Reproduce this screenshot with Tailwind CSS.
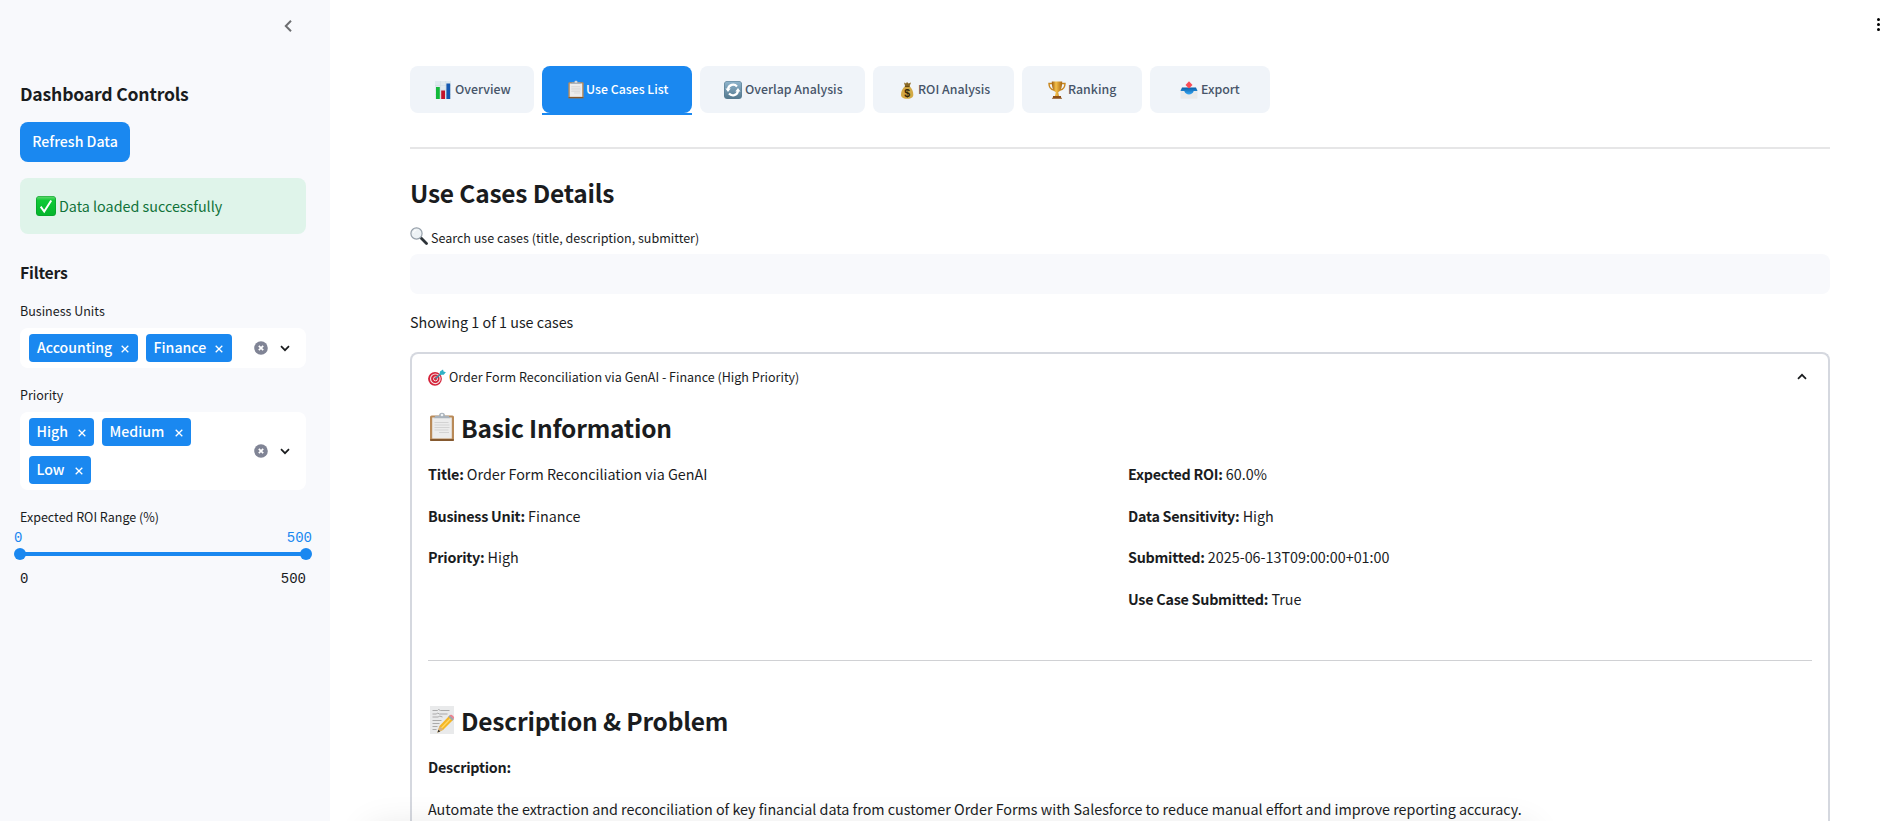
<!DOCTYPE html>
<html lang="en">
<head>
<meta charset="utf-8">
<title>Use Cases Dashboard</title>
<script src="https://cdn.jsdelivr.net/npm/@tailwindcss/browser@4"></script>
</head>
<body class="h-[821px] w-[1884px] overflow-hidden bg-white font-['Noto_Sans_CJK_SC','Noto_Sans',sans-serif] text-[14.33px] text-[#1a1c1e]">
<svg class="absolute size-0" xmlns="http://www.w3.org/2000/svg">
  <defs>
    <linearGradient id="gold" x1="0" x2="1"><stop offset="0" stop-color="#9a5a10"/><stop offset=".4" stop-color="#f4c04a"/><stop offset="1" stop-color="#a8650f"/></linearGradient>
    <linearGradient id="green" x1="0" y1="0" x2="0" y2="1"><stop offset="0" stop-color="#5fd86c"/><stop offset=".2" stop-color="#0fc936"/><stop offset="1" stop-color="#04b52c"/></linearGradient>
    <linearGradient id="steel" x1="0" y1="0" x2="0" y2="1"><stop offset="0" stop-color="#8fb4cc"/><stop offset="1" stop-color="#54798f"/></linearGradient>
    <linearGradient id="tray" x1="0" y1="0" x2="0" y2="1"><stop offset="0" stop-color="#0b5fa8"/><stop offset="1" stop-color="#35a5f2"/></linearGradient>
  </defs>
  <symbol id="clipboard" viewBox="0 0 28 30">
    <rect x="2" y="3.5" width="24" height="25.5" rx="1.6" fill="#b98a58"/>
    <rect x="2" y="27" width="24" height="2" rx="1" fill="#85592f"/>
    <rect x="4.2" y="5.5" width="19.6" height="21" fill="#ececec"/>
    <path d="M6.5 10.5h14M6.5 13h15M6.5 15.5h15M6.5 18h14M11 20.5h10" stroke="#d3d3d3" stroke-width="1.2"/>
    <path d="M5.5 6.2h17L20.500 3.800h-3.500a3 3 0 0 0-6 0H7.500z" fill="#a9b2bb"/>
    <circle cx="14" cy="3" r="1.300" fill="#eef2f5"/>
  </symbol>
  <symbol id="caret" viewBox="0 0 10 7"><path d="M1 1.200 5 5.200 9 1.200" fill="none" stroke="currentColor" stroke-width="1.700"/></symbol>
  <symbol id="cross" viewBox="0 0 8 8"><path d="M.7.7 7.300 7.300M7.300.7.7 7.300" fill="none" stroke="currentColor" stroke-width="1.300"/></symbol>
  <symbol id="clear" viewBox="0 0 14 14"><circle cx="7" cy="7" r="6.800" fill="#808495"/><path d="m4.800 4.800 4.400 4.400M9.200 4.800 4.800 9.200" stroke="#fff" stroke-width="1.700"/></symbol>
</svg>

<div class="flex h-full overflow-hidden">
  <aside class="flex w-[330px] shrink-0 flex-col bg-[#f8f9fc] pr-6 pl-5">
    <div class="flex h-[82px] justify-end pt-5 pr-[14px]">
      <svg class="h-3 w-[8px] text-[#6d6e71]" viewBox="0 0 8 12"><path d="M7 .8 1.800 6 7 11.200" fill="none" stroke="currentColor" stroke-width="2"/></svg>
    </div>
    <h2 class="h-6 text-[17.6px] leading-6 font-bold tracking-[-0.2px]">Dashboard Controls</h2>
    <button class="mt-4 flex h-10 w-[110px] items-center justify-center rounded-lg bg-[#1a88f0] text-[14.15px] font-medium text-white">Refresh Data</button>
    <div class="mt-4 flex h-14 items-center gap-[3px] rounded-lg bg-[#dff4ea] pl-4 text-[14.33px] text-[#0f7239]">
      <svg class="size-5" viewBox="0 0 20 20"><rect width="20" height="20" rx="3.500" fill="#069b2a"/><rect x=".6" y=".6" width="18.800" height="18.800" rx="3" fill="url(#green)"/><path d="m4.700 10.700 3.500 4.800 7-11" fill="none" stroke="#fff" stroke-width="2"/></svg>
      <span>Data loaded successfully</span>
    </div>
    <h3 class="mt-7 h-[22px] text-[15.8px] leading-[22px] font-bold tracking-[-0.2px]">Filters</h3>

    <label class="mt-4 h-[21px] text-[12.53px] leading-[21px]">Business Units</label>
    <div class="mt-[7px] flex h-10 items-center rounded-lg bg-white pr-4 pl-[9px]">
      <div class="flex grow gap-2 font-medium text-white">
        <span class="flex h-7 w-[109px] items-center justify-between rounded bg-[#1a88f0] pr-[9px] pl-2 text-[14.05px]"><span class="leading-[26px] pb-[2px]">Accounting</span><svg class="mt-px size-2"><use href="#cross"/></svg></span>
        <span class="flex h-7 w-[86px] items-center justify-between rounded bg-[#1a88f0] pr-[9px] pl-[7.500px] text-[14.15px]"><span class="leading-[26px] pb-[2px]">Finance</span><svg class="mt-px size-2"><use href="#cross"/></svg></span>
      </div>
      <svg class="mr-3 size-[14px] shrink-0"><use href="#clear"/></svg>
      <svg class="h-[7px] w-[10px] shrink-0"><use href="#caret"/></svg>
    </div>

    <label class="mt-4 h-[21px] text-[12.53px] leading-[21px]">Priority</label>
    <div class="mt-[7px] flex h-[78px] items-center rounded-lg bg-white pr-4 pl-[9px]">
      <div class="flex grow flex-wrap gap-x-2 gap-y-[10px] font-medium text-white">
        <span class="flex h-7 w-[65px] items-center justify-between rounded bg-[#1a88f0] pr-2 pl-[7.500px] text-[14.15px]"><span class="leading-[26px] pb-[2px]">High</span><svg class="mt-px size-2"><use href="#cross"/></svg></span>
        <span class="flex h-7 w-[89px] items-center justify-between rounded bg-[#1a88f0] pr-2 pl-[7.500px] text-[14.15px]"><span class="leading-[26px] pb-[2px]">Medium</span><svg class="mt-px size-2"><use href="#cross"/></svg></span>
        <span class="flex h-7 w-[62px] items-center justify-between rounded bg-[#1a88f0] pr-2 pl-[7.500px] text-[14.15px]"><span class="leading-[26px] pb-[2px]">Low</span><svg class="mt-px size-2"><use href="#cross"/></svg></span>
      </div>
      <svg class="mr-3 size-[14px] shrink-0"><use href="#clear"/></svg>
      <svg class="h-[7px] w-[10px] shrink-0"><use href="#caret"/></svg>
    </div>

    <label class="mt-4 h-[21px] text-[12.53px] leading-[21px]">Expected ROI Range (%)</label>
    <div class="-mx-[6px] mt-[3px] flex h-4 justify-between font-['Liberation_Mono',monospace] text-[14px] leading-4 text-[#1a88f0]"><span>0</span><span>500</span></div>
    <div class="-mx-[6px] mt-[2px] flex h-3 items-center">
      <span class="size-3 rounded-full bg-[#1a88f0]"></span><span class="-mx-1 h-1 grow bg-[#1a88f0]"></span><span class="size-3 rounded-full bg-[#1a88f0]"></span>
    </div>
    <div class="mt-[11px] flex h-4 justify-between font-['Liberation_Mono',monospace] text-[14px] leading-4"><span>0</span><span>500</span></div>
  </aside>

  <main class="flex min-h-0 grow flex-col overflow-hidden pt-[66px] pr-[54px] pl-20">
    <nav class="flex h-[47px] shrink-0 gap-2 text-[12.35px] font-medium text-[#475569]">
      <div class="flex w-[124px] items-center gap-[2px] rounded-lg bg-[#f0f4f9] pl-[25px]">
        <svg class="size-[18px]" viewBox="0 0 18 18"><rect width="16" height="18" fill="#dfe9ef"/><path d="M0 4.500h16M0 9h16M0 13.500h16M5.500 0v18M10.700 0v18" stroke="#cbd9e2" stroke-width=".5"/><rect x="1" y="6" width="3.800" height="12" fill="#12b93a"/><rect x="6.200" y="9.500" width="3.800" height="8.500" fill="#c3142c"/><rect x="11.400" y="2.500" width="3.800" height="15.500" fill="#1257b0"/></svg>
        <span>Overview</span>
      </div>
      <div class="relative flex w-[150px] items-center gap-px rounded-lg bg-[#1a88f0] pl-[25px] text-white">
        <svg class="h-[19px] w-[18px]"><use href="#clipboard"/></svg>
        <span>Use Cases List</span>
        <span class="absolute inset-x-0 -bottom-[2px] h-[2px] bg-[#1a88f0]"></span>
      </div>
      <div class="flex w-[165px] items-center gap-[3px] rounded-lg bg-[#f0f4f9] pl-6">
        <svg class="size-[18px]" viewBox="0 0 18 18"><rect width="18" height="18" rx="3.500" fill="#567b92"/><rect x=".6" y=".6" width="16.800" height="16.800" rx="3" fill="url(#steel)"/><path d="M4 8a5.200 5.200 0 0 1 9-2.600M14 10a5.200 5.200 0 0 1-9 2.600" fill="none" stroke="#fff" stroke-width="2.200"/><path d="M1.500 7.500h5.200L4 11zM11.300 10.500h5.200L14 7z" fill="#fff"/></svg>
        <span>Overlap Analysis</span>
      </div>
      <div class="flex w-[141px] items-center gap-[2px] rounded-lg bg-[#f0f4f9] pl-[25px]">
        <svg class="size-[18px]" viewBox="0 0 18 18"><path d="M6 1.500 8 2.500 9 1l1.500 1.500L13 1.500 11.300 6h-4z" fill="#8a6a26"/><path d="M7 5h4.500c2.500 2.500 3.800 5.500 3.800 8.500 0 2.700-1.500 4.200-6.100 4.200S3 16.200 3 13.500C3 10.500 4.500 7.500 7 5z" fill="#d3a945"/><path d="M7 5.500h4.600" stroke="#6b4d14" stroke-width="1.200"/><text x="9.200" y="15.700" text-anchor="middle" font-family="Liberation Sans" font-weight="bold" font-size="10.500" fill="#33250a">$</text></svg>
        <span>ROI Analysis</span>
      </div>
      <div class="flex w-[120px] items-center gap-[2px] rounded-lg bg-[#f0f4f9] pl-[26px]">
        <svg class="size-[18px]" viewBox="0 0 18 18"><path d="M4 2.500H1c0 4 2 6 5 6.500M14 2.500h3c0 4-2 6-5 6.500" fill="none" stroke="#c8861e" stroke-width="1.400"/><path d="M3.800.5h10.400c0 5-1 9.500-4 10.700L11 15H7l.8-3.800C4.800 10 3.800 5.500 3.800.5z" fill="url(#gold)"/><path d="M5 15h8v1.200l1.200 1.600H3.800L5 16.200z" fill="#8d4f17"/></svg>
        <span>Ranking</span>
      </div>
      <div class="flex w-[120px] items-center gap-[3px] rounded-lg bg-[#f0f4f9] pl-[30px]">
        <svg class="size-[18px]" viewBox="0 0 18 18"><path d="M.5 8h17v9a.8.8 0 0 1-.8.8H1.300a.8.800 0 0 1-.8-.8z" fill="#e9eaeb"/><path d="M2 6.500h14L17.500 10h-3.800c-1 4.500-8.400 4.500-9.400 0H.5z" fill="url(#tray)"/><path d="M9 .3 12.500 4 9 7.500 5.500 4z" fill="#fa4c57"/></svg>
        <span>Export</span>
      </div>
    </nav>

    <div class="mt-[34px] h-[2px] shrink-0 bg-[#e6e6e7]"></div>
    <h1 class="mt-[27px] h-[34px] shrink-0 text-[24.5px] leading-[34px] font-bold tracking-[-0.2px]">Use Cases Details</h1>
    <label class="mt-[17px] flex h-[23px] shrink-0 items-center gap-[3px] text-[12.53px]">
      <svg class="-mt-[5px] size-[18px]" viewBox="0 0 18 18"><path d="m10.800 10.800 5.700 5.700" stroke="#2d3338" stroke-width="2.800" stroke-linecap="round"/><circle cx="6.500" cy="6.500" r="5.600" fill="#edf2f5" stroke="#96a0aa" stroke-width="1.200"/><path d="M3.500 6a3 3 0 0 1 3-3" stroke="#fff" fill="none"/></svg>
      <span>Search use cases (title, description, submitter)</span>
    </label>
    <div class="mt-1 h-10 shrink-0 rounded-lg bg-[#f8f9fc]"></div>
    <p class="mt-[15px] h-[25px] shrink-0 leading-[25px]">Showing 1 of 1 use cases</p>

    <section class="mt-[18px] min-h-0 flex-1 overflow-hidden rounded-t-lg border-2 border-b-0 border-[#d5d8df] px-4 pt-3">
      <div class="flex h-[23px] items-center gap-[3px] text-[12.53px]">
        <svg class="size-[18px]" viewBox="0 0 18 18"><circle cx="7" cy="9.800" r="6.900" fill="#d5233a"/><circle cx="7.300" cy="9.800" r="4.800" fill="none" stroke="#f3dfe0" stroke-width="1.200"/><circle cx="7.500" cy="9.800" r="2" fill="none" stroke="#f3dfe0" stroke-width="1"/><path d="m7.500 9.500 7-6" stroke="#2b8fa8" stroke-width="1.200"/><path d="M11.500 5.800 12 2.600 15 .5l.6 2 2.300.8-2.200 2.500z" fill="#2fb2c6"/></svg>
        <span class="grow">Order Form Reconciliation via GenAI - Finance (High Priority)</span>
        <svg class="mr-[5px] -mt-[3px] h-[7px] w-[10px] rotate-180"><use href="#caret"/></svg>
      </div>
      <h2 class="mt-[22px] flex h-[34px] items-center gap-[5px] text-[24.5px] leading-[34px] font-bold tracking-[-0.2px]">
        <svg class="-mt-[3px] h-[30px] w-7"><use href="#clipboard"/></svg><span>Basic Information</span>
      </h2>
      <div class="mt-2 grid h-[207px] grid-cols-2 gap-x-4 leading-[41.600px]">
        <div>
          <p class="h-[41.600px]"><b class="tracking-[-0.2px]">Title:</b> Order Form Reconciliation via GenAI</p>
          <p class="h-[41.600px]"><b class="tracking-[-0.25px]">Business Unit:</b> Finance</p>
          <p class="h-[41.600px]"><b class="tracking-[-0.25px]">Priority:</b> High</p>
        </div>
        <div>
          <p class="h-[41.600px]"><b class="tracking-[-0.25px]">Expected ROI:</b> 60.0%</p>
          <p class="h-[41.600px]"><b class="tracking-[-0.25px]">Data Sensitivity:</b> High</p>
          <p class="h-[41.600px]"><b class="tracking-[-0.25px]">Submitted:</b> 2025-06-13T09:00:00+01:00</p>
          <p class="h-[41.600px]"><b class="tracking-[-0.25px]">Use Case Submitted:</b> True</p>
        </div>
      </div>
      <div class="h-px bg-[#d0d1d4]"></div>
      <h2 class="mt-[43px] flex h-[34px] items-center gap-[5px] text-[24.5px] leading-[34px] font-bold tracking-[-0.2px]">
        <svg class="-mt-[2px] h-7 w-7" viewBox="0 0 28 28"><rect x="2" y="0" width="24" height="28" fill="#e9eaeb"/><path d="M4.500 4.500h5l1-1 2 1h9M4.500 8h4l1-1 2 1h8M4.500 11h6l1-1 3 1M4.500 14.500h9M4.500 17.500h7M4.500 20.500h5M4.500 23.500h4" fill="none" stroke="#a3a3a3" stroke-width=".9"/><path d="m9.500 26.500 2-6.500 10-10.500 4 4-10.500 10.500z" fill="#f5b625"/><path d="m13 22.500 10.500-11" stroke="#ffd968" stroke-width="1.200"/><path d="m9.500 26.500 2-6.500 4 3.500z" fill="#d9b27c"/><path d="m9.500 26.500.8-2.800 2 1.800z" fill="#333"/><path d="m20.300 10.800 1.700-1.800 4 4-1.700 1.700z" fill="#9fa8ad"/><path d="M21.500 9.300c1.600-2 5.800 1.600 4.300 3.600z" fill="#ee7f8d"/></svg><span>Description &amp; Problem</span>
      </h2>
      <div class="mt-2 leading-[41.600px]">
        <p class="h-[41.600px]"><b class="tracking-[-0.25px]">Description:</b></p>
        <p class="h-[41.600px]">Automate the extraction and reconciliation of key financial data from customer Order Forms with Salesforce to reduce manual effort and improve reporting accuracy.</p>
      </div>
    </section>
  </main>
</div>

<!-- overflow menu -->
<div class="absolute top-[18px] right-1 flex flex-col gap-[2px]"><span class="size-[3px] rounded-full bg-black"></span><span class="size-[3px] rounded-full bg-black"></span><span class="size-[3px] rounded-full bg-black"></span></div>
<!-- soft shadow rising from the bottom edge -->
<div class="pointer-events-none absolute inset-x-0 bottom-0 h-16 overflow-hidden"><div class="mx-auto mt-[72px] mr-[354px] h-10 w-[1160px] shadow-[0_0_36px_rgba(0,0,0,0.12)]"></div></div>
</body>
</html>
